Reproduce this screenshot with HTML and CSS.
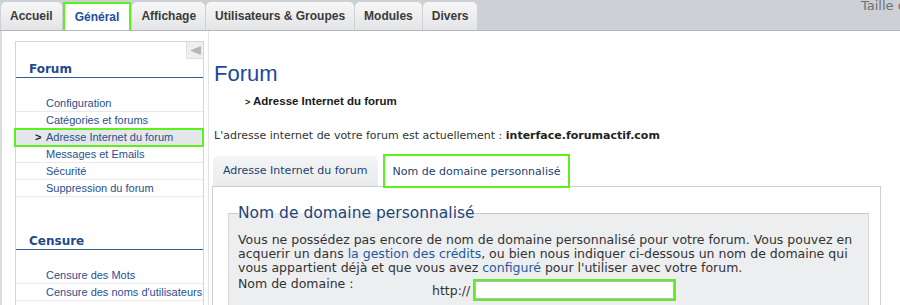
FILE: index.html
```html
<!DOCTYPE html>
<html lang="fr">
<head>
    <meta charset="UTF-8">
    <title>Panneau d'administration - Général</title>
    <link rel="stylesheet" href="styles.css">
</head>
<body>
    <div class="topbar">
        <ul class="tabs">
            <li>Accueil</li>
            <li class="active">Général</li>
            <li>Affichage</li>
            <li>Utilisateurs &amp; Groupes</li>
            <li>Modules</li>
            <li>Divers</li>
        </ul>
        <span class="text-size">Taille du texte</span>
    </div>

    <div class="page">
        <div class="side">
            <div class="menu">
                <div class="menu-top">
                    <span class="collapse">
                        <svg width="11" height="9" viewBox="0 0 11 9"><polygon points="0,4.5 11,0 11,9" fill="#b4b6b9"/></svg>
                    </span>
                </div>
                <h3>Forum</h3>
                <ul>
                    <li><a href="#">Configuration</a></li>
                    <li><a href="#">Catégories et forums</a></li>
                    <li class="current"><a href="#">Adresse Internet du forum</a></li>
                    <li><a href="#">Messages et Emails</a></li>
                    <li><a href="#">Sécurité</a></li>
                    <li><a href="#">Suppression du forum</a></li>
                </ul>
                <h3 class="group">Censure</h3>
                <ul>
                    <li><a href="#">Censure des Mots</a></li>
                    <li><a href="#">Censure des noms d'utilisateurs</a></li>
                </ul>
            </div>
        </div>

        <div class="main">
            <h1>Forum</h1>
            <div class="crumb"><span class="crumb-arrow">&gt;</span> Adresse Internet du forum</div>
            <p class="current-url">L'adresse internet de votre forum est actuellement : <b>interface.forumactif.com</b></p>

            <div class="subtabs">
                <span class="subtab">Adresse Internet du forum</span>
                <span class="subtab active">Nom de domaine personnalisé</span>
            </div>
            <div class="panel">
                <fieldset>
                    <legend>Nom de domaine personnalisé</legend>
                    <p>Vous ne possédez pas encore de nom de domaine personnalisé pour votre forum. Vous pouvez en acquerir un dans <a href="#">la gestion des crédits</a>, ou bien nous indiquer ci-dessous un nom de domaine qui vous appartient déjà et que vous avez <a href="#">configuré</a> pour l'utiliser avec votre forum.</p>
                    <div class="field">
                        <label for="domain">Nom de domaine :</label>
                        <div class="field-input">
                            <span>http://</span>
                            <input type="text" id="domain">
                        </div>
                    </div>
                </fieldset>
            </div>
        </div>
    </div>
</body>
</html>
```

FILE: styles.css
```css
html, body {
    margin: 0;
    padding: 0;
    overflow: hidden;
}

body {
    width: 900px;
    height: 305px;
    font-family: "DejaVu Sans", Verdana, sans-serif;
    font-size: 11px;
    color: #333;
    background: #fff;
}

/* Top navigation */
.topbar {
    display: flex;
    align-items: flex-start;
    height: 30px;
    background: #cdd0d4;
    border-bottom: 1px solid #b4b8bc;
    overflow: hidden;
}

.tabs {
    display: flex;
    flex-shrink: 0;
    gap: 1px;
    width: 861px;
    margin: 0;
    padding: 2px 0 0 1px;
    box-sizing: border-box;
    list-style: none;
}

.tabs li {
    height: 28px;
    line-height: 28px;
    padding: 0 9px;
    font-family: "Liberation Sans", Arial, sans-serif;
    font-size: 12px;
    font-weight: bold;
    color: #3a3a3a;
    background: linear-gradient(#f7f7f7, #e3e4e6);
    border-radius: 5px 5px 0 0;
    cursor: pointer;
}

.tabs li.active {
    position: relative;
    z-index: 2;
    height: 31px;
    line-height: 27px;
    padding: 0 10px;
    color: #1f4d9c;
    background: #fff;
    border: 2px solid #5cf01e;
    border-radius: 0;
    box-sizing: border-box;
}

.text-size {
    font-size: 13px;
    line-height: 12px;
    color: #6c7074;
    white-space: nowrap;
}

/* Page */
.page {
    display: flex;
    border-left: 2px solid #dcdcdc;
    height: 274px;
}

.side {
    width: 193px;
    padding: 10px 0 0 13px;
    border-right: 1px solid #e4e4e4;
    flex-shrink: 0;
}

.menu {
    width: 187px;
    height: 100%;
    border: 1px solid #d4d6d8;
    border-bottom: none;
}

.menu-top {
    display: flex;
    justify-content: flex-end;
    height: 17px;
}

.collapse {
    display: flex;
    align-items: center;
    justify-content: center;
    width: 16px;
    height: 16px;
    background: #eeeff0;
    border: 1px solid #dedfe0;
    border-top: none;
    border-right: none;
}

.menu h3 {
    margin: 0;
    padding: 2px 0 0 13px;
    line-height: 16px;
    font-size: 12px;
    font-weight: bold;
    color: #1d4a8e;
    border-bottom: 1px solid #2e5d96;
}

.menu h3.group {
    margin-top: 34px;
}

.menu ul {
    margin: 17px 0 0;
    padding: 0;
    list-style: none;
}

.menu li {
    height: 16px;
    line-height: 16px;
    padding-left: 30px;
    border-bottom: 1px solid #e9e9ea;
    font-family: "Liberation Sans", Arial, sans-serif;
    font-size: 11px;
    white-space: nowrap;
}

.menu li a {
    color: #27508e;
    text-decoration: none;
}

.menu li.current {
    background: #e4e6e9;
    outline: 2px solid #5cf01e;
    outline-offset: -1px;
    margin-left: -1px;
    padding-left: 31px;
}

.menu li.current::before {
    content: ">";
    display: inline-block;
    width: 11px;
    margin-left: -11px;
    color: #222;
    font-weight: bold;
}

/* Main content */
.main {
    flex: 1;
    padding: 30px 19px 0 4px;
}

.main h1 {
    margin: 0 0 0 1px;
    font-family: "Liberation Sans", Arial, sans-serif;
    font-size: 22px;
    line-height: 26px;
    font-weight: normal;
    color: #1a4a9b;
}

.crumb {
    margin-top: 7px;
    padding-left: 32px;
    line-height: 14px;
    font-family: "Liberation Sans", Arial, sans-serif;
    font-size: 11.5px;
    font-weight: bold;
    color: #1a1a1a;
}

.crumb-arrow {
    font-size: 9px;
}

.current-url {
    margin: 20px 0 0 1px;
    line-height: 14px;
    color: #333;
}

.current-url b {
    color: #222;
}

.subtabs {
    display: flex;
    gap: 5px;
    margin-top: 13px;
    height: 30px;
}

.subtab {
    padding: 0 10px;
    line-height: 30px;
    font-size: 11px;
    color: #203f73;
    background: linear-gradient(#f3f4f5, #e9ebed);
    border-radius: 6px 6px 0 0;
    white-space: nowrap;
}

.subtab.active {
    position: relative;
    z-index: 2;
    height: 34px;
    margin-top: -2px;
    padding: 0 8px;
    line-height: 32px;
    background: #fff;
    border: 2px solid #5cf01e;
    border-radius: 0;
    box-sizing: border-box;
}

.panel {
    margin-left: -1px;
    height: 101px;
    padding: 17px 11px 0 15px;
    border: 1px solid #cfcfcf;
    border-bottom: none;
    overflow: hidden;
}

fieldset {
    margin: 0;
    padding: 11px 10px 20px 9px;
    background: #eceef0;
    border: 1px solid #d6d8da;
    border-top-color: #c6c8ca;
}

legend {
    padding: 0;
    line-height: 18px;
    font-size: 15.5px;
    color: #1c4679;
}

fieldset p {
    margin: 0;
    line-height: 14px;
    font-size: 12.5px;
    color: #333;
}

fieldset a {
    color: #1f5aa2;
    text-decoration: none;
}

.field {
    display: flex;
    margin-top: 2px;
    font-size: 12.5px;
}

.field label {
    width: 194px;
    line-height: 14px;
    flex-shrink: 0;
}

.field-input {
    display: flex;
    align-items: center;
    margin-top: 4px;
}

.field-input span {
    margin-right: 5px;
}

.field-input input {
    width: 199px;
    height: 18px;
    margin: 0;
    padding: 0 2px;
    box-sizing: border-box;
    border: 1px solid #b8b8b8;
    outline: 2px solid #5cf01e;
    font-family: inherit;
    font-size: 11px;
}
```
